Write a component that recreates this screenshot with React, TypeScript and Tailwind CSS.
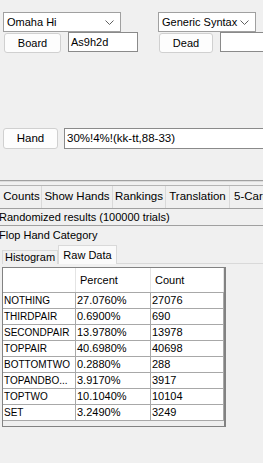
import React from "react";

const rows: [string, string, string][] = [
  ["NOTHING", "27.0760%", "27076"],
  ["THIRDPAIR", "0.6900%", "690"],
  ["SECONDPAIR", "13.9780%", "13978"],
  ["TOPPAIR", "40.6980%", "40698"],
  ["BOTTOMTWO", "0.2880%", "288"],
  ["TOPANDBO...", "3.9170%", "3917"],
  ["TOPTWO", "10.1040%", "10104"],
  ["SET", "3.2490%", "3249"],
];

function Chevron() {
  return (
    <svg width="9" height="5" viewBox="0 0 9 5" className="shrink-0">
      <polyline points="0.5,0.5 4.5,4.5 8.5,0.5" fill="none" stroke="#606060" strokeWidth="1" />
    </svg>
  );
}

function Combo({ label, w }: { label: string; w: string }) {
  return (
    <div className={`${w} h-[20px] bg-white border border-[#a0a0a0] flex items-center pl-[3px] pr-[6px] justify-between`}>
      <span className="leading-none">{label}</span>
      <Chevron />
    </div>
  );
}

function Btn({ label, w, h = "h-[20px]" }: { label: string; w: string; h?: string }) {
  return (
    <div className={`${w} ${h} shrink-0 rounded-[3px] border border-[#d0d0d0] bg-[#fdfdfd] flex items-center justify-center`}>
      {label}
    </div>
  );
}

function Field({ value, w, h = "h-[20px]" }: { value: string; w: string; h?: string }) {
  return (
    <div className={`${w} ${h} shrink-0 bg-white border border-[#8a8a8a] flex items-center pl-[2px] overflow-hidden whitespace-nowrap`}>
      {value}
    </div>
  );
}

export default function App() {
  return (
    <div
      className="w-[263px] h-[463px] bg-[#f0f0f0] overflow-hidden text-[11px] text-black"
      style={{ fontFamily: '"Liberation Sans", Arial, sans-serif' }}
    >
      {/* input panel */}
      <div className="h-[180px] pt-[12px]">
        <div className="flex h-[116px]">
          <div className="ml-[3px] w-[135px] shrink-0">
            <Combo label="Omaha Hi" w="w-[118px]" />
            <div className="flex">
              <div className="ml-[1px] mt-[1px]">
                <Btn label="Board" w="w-[57px]" />
              </div>
              <div className="ml-[7px]">
                <Field value="As9h2d" w="w-[70px]" />
              </div>
            </div>
          </div>
          <div className="ml-[20px] shrink-0">
            <Combo label="Generic Syntax" w="w-[98px]" />
            <div className="flex">
              <div className="ml-[1px] mt-[1px]">
                <Btn label="Dead" w="w-[54px]" />
              </div>
              <div className="ml-[7px]">
                <Field value="" w="w-[60px]" />
              </div>
            </div>
          </div>
        </div>
        <div className="flex ml-[3px] text-[11.5px]">
          <Btn label="Hand" w="w-[55px]" h="h-[21px]" />
          <div className="ml-[6px]">
            <Field value="30%!4%!(kk-tt,88-33)" w="w-[220px]" h="h-[21px]" />
          </div>
        </div>
      </div>

      {/* results */}
      <div className="h-px bg-[#a0a0a0]" />
      <div className="h-[4px] border-t border-[#dcdcdc]" />
      <div className="h-px bg-[#b4b4b4]" />
      <div className="flex h-[22px] pl-[2px] whitespace-nowrap text-[11.5px]">
        <div className="w-[40px] shrink-0 border-r border-[#d9d9d9] flex items-center justify-center">Counts</div>
        <div className="w-[71px] shrink-0 border-r border-[#d9d9d9] flex items-center justify-center">Show Hands</div>
        <div className="w-[53px] shrink-0 border-r border-[#d9d9d9] flex items-center justify-center">Rankings</div>
        <div className="w-[64px] shrink-0 border-r border-[#d9d9d9] flex items-center justify-center">Translation</div>
        <div className="w-[60px] shrink-0 flex items-center pl-[4px]">5-Card</div>
      </div>
      <div className="h-px bg-[#a0a0a0]" />
      <div className="h-[16px] flex items-center whitespace-nowrap -ml-[1px]">Randomized results (100000 trials)</div>
      <div className="h-px bg-[#a0a0a0]" />
      <div className="h-[19px] flex items-center whitespace-nowrap -ml-[1px]">Flop Hand Category</div>

      <div className="flex items-end h-[19px] pl-[2px]">
        <div className="w-[56px] h-[14px] border border-b-0 border-[#d9d9d9] bg-[#f0f0f0] flex items-center justify-center">
          Histogram
        </div>
        <div className="w-[59px] h-[19px] border border-b-0 border-[#d9d9d9] bg-[#fafafa] flex items-center justify-center">
          Raw Data
        </div>
        <div className="flex-1 border-b border-[#d9d9d9]" />
      </div>

      <div className="pt-[3px] pl-[2px]">
        <div className="w-[224px] border-l border-t border-b border-r-2 border-[#828282] bg-[#efefef]">
          <div className="flex h-[25px] bg-white border-b border-[#a8a8a8]">
            <div className="w-[73px] border-r border-[#e4e4e4]" />
            <div className="w-[75px] border-r border-[#e4e4e4] flex items-center pl-[4px]">Percent</div>
            <div className="w-[73px] border-r border-[#e4e4e4] flex items-center pl-[4px]">Count</div>
          </div>
          {rows.map((r) => (
            <div key={r[0]} className="flex h-[16px] bg-white border-b border-[#a8a8a8] whitespace-nowrap">
              <div className="w-[73px] border-r border-[#a8a8a8] flex items-center pl-px text-[10px] overflow-hidden">{r[0]}</div>
              <div className="w-[75px] border-r border-[#a8a8a8] flex items-center pl-px">{r[1]}</div>
              <div className="w-[73px] border-r border-[#a8a8a8] flex items-center pl-px">{r[2]}</div>
            </div>
          ))}
          <div className="h-[5px]" />
        </div>
      </div>
    </div>
  );
}
